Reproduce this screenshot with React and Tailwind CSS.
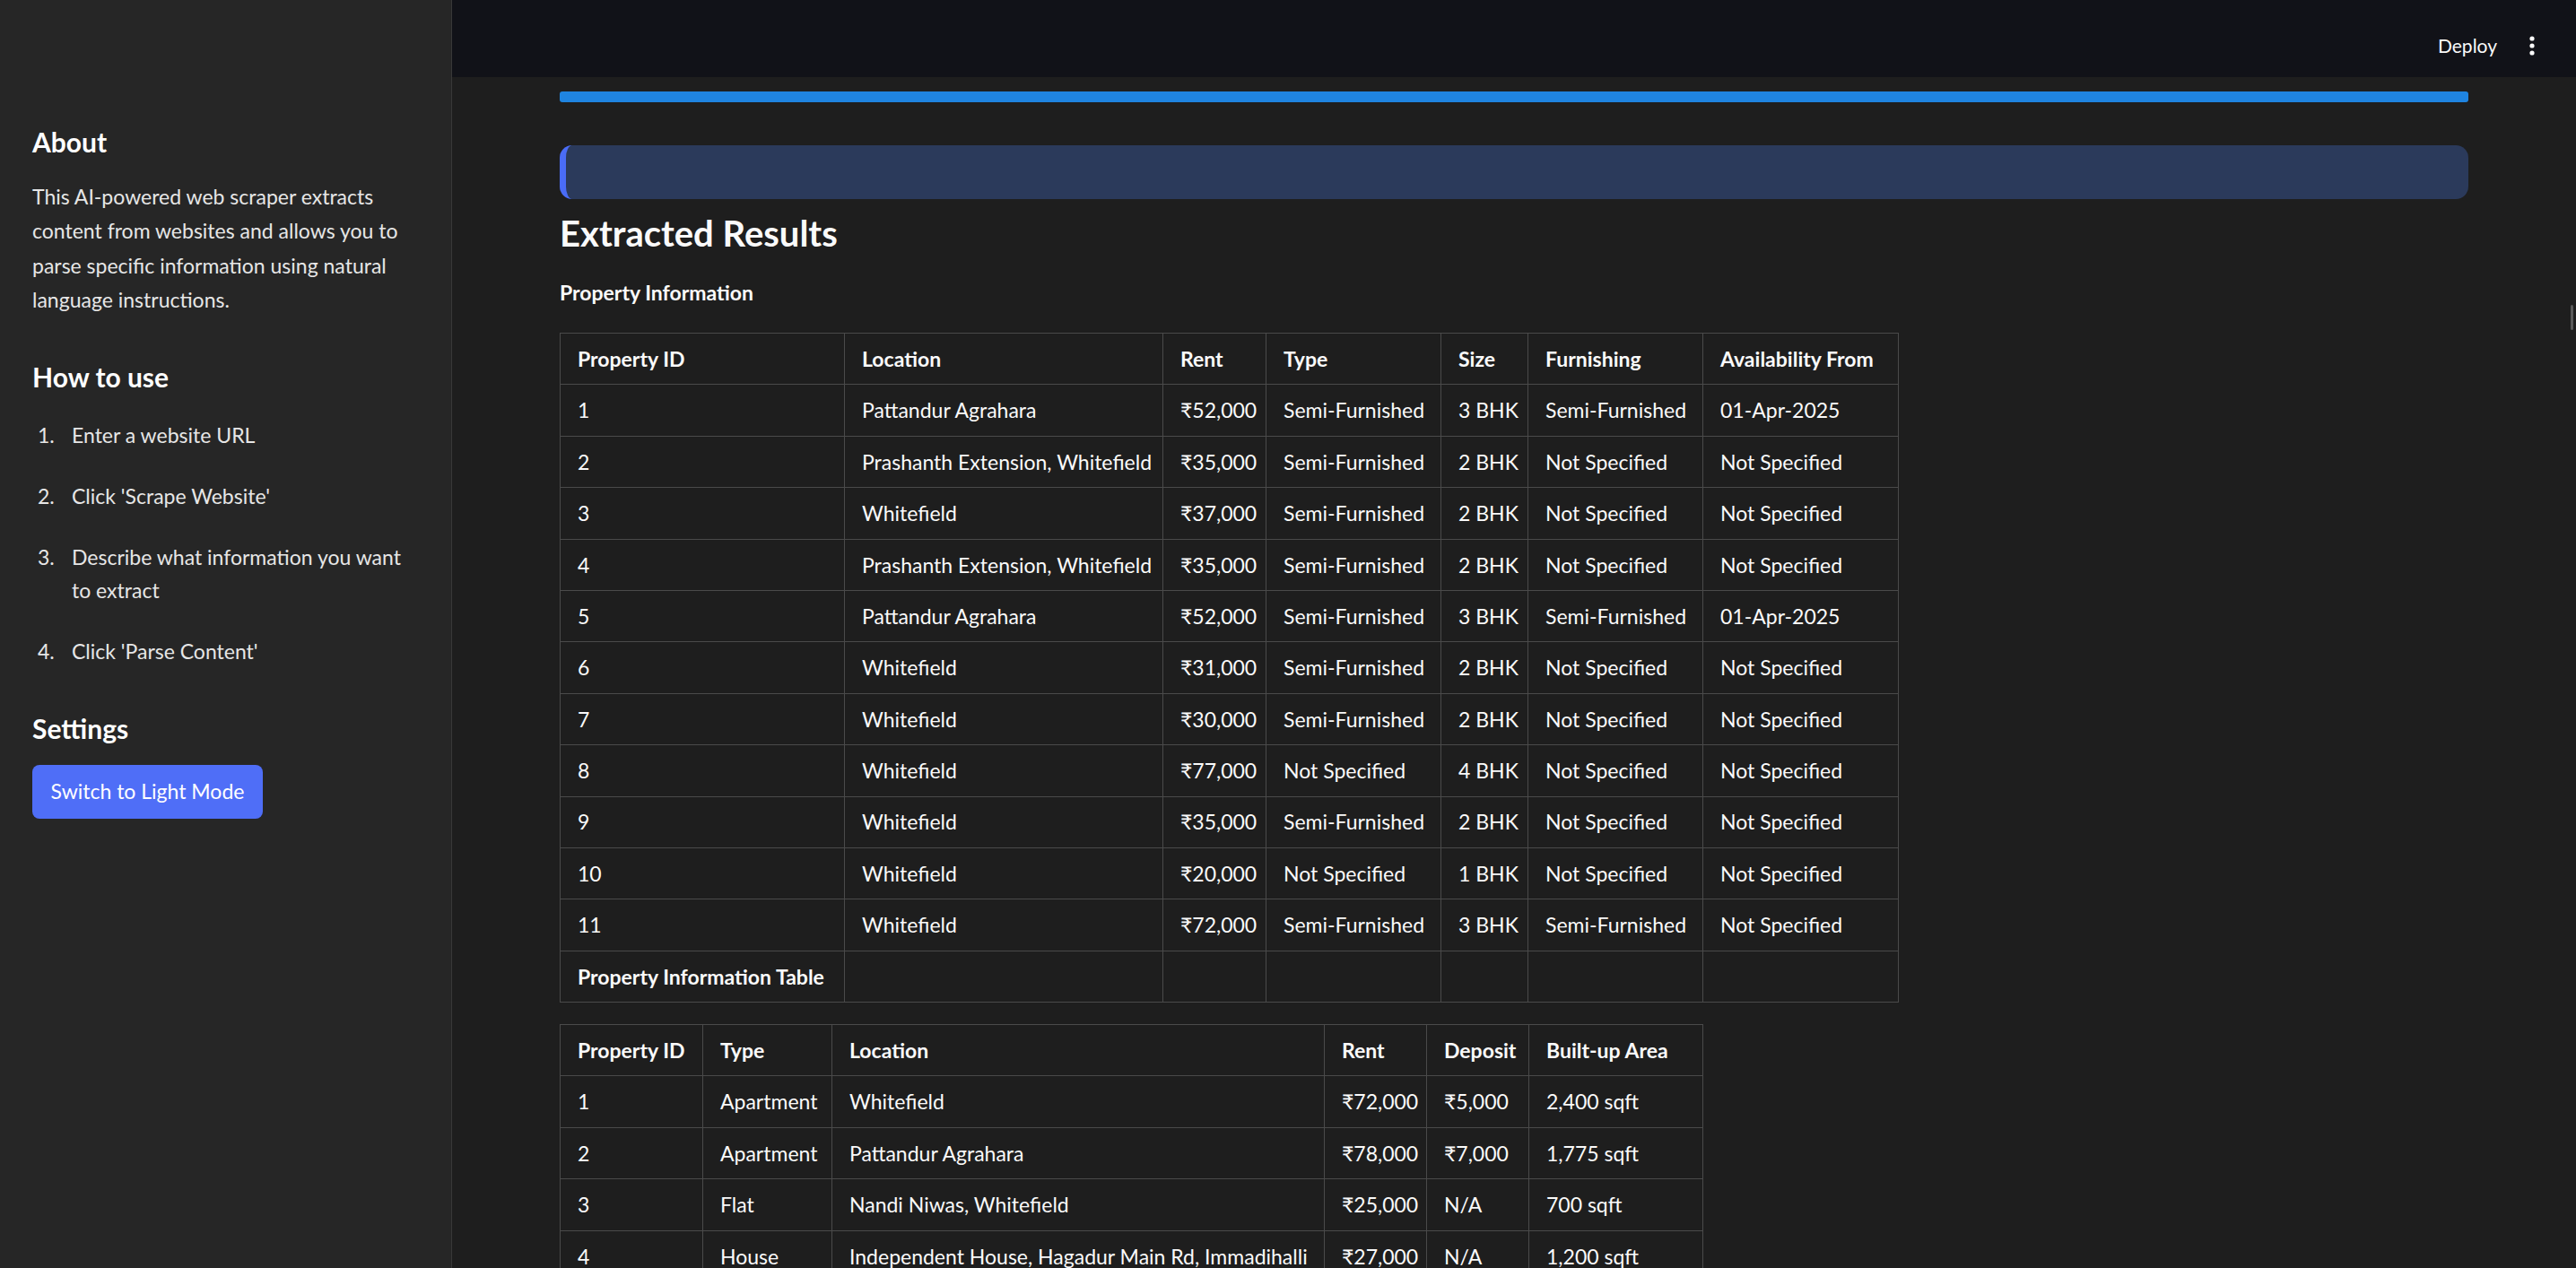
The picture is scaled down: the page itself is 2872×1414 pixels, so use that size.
const steps = [
  ["1.", "Enter a website URL"],
  ["2.", "Click 'Scrape Website'"],
  ["3.", "Describe what information you want to extract"],
  ["4.", "Click 'Parse Content'"],
]

const NS = "Not Specified"
const SF = "Semi-Furnished"

const propertyCols = [
  ["Property ID", 317],
  ["Location", 355],
  ["Rent", 115],
  ["Type", 195],
  ["Size", 97],
  ["Furnishing", 195],
  ["Availability From", 218],
]

const propertyRows = [
  ["1", "Pattandur Agrahara", "₹52,000", SF, "3 BHK", SF, "01-Apr-2025"],
  ["2", "Prashanth Extension, Whitefield", "₹35,000", SF, "2 BHK", NS, NS],
  ["3", "Whitefield", "₹37,000", SF, "2 BHK", NS, NS],
  ["4", "Prashanth Extension, Whitefield", "₹35,000", SF, "2 BHK", NS, NS],
  ["5", "Pattandur Agrahara", "₹52,000", SF, "3 BHK", SF, "01-Apr-2025"],
  ["6", "Whitefield", "₹31,000", SF, "2 BHK", NS, NS],
  ["7", "Whitefield", "₹30,000", SF, "2 BHK", NS, NS],
  ["8", "Whitefield", "₹77,000", NS, "4 BHK", NS, NS],
  ["9", "Whitefield", "₹35,000", SF, "2 BHK", NS, NS],
  ["10", "Whitefield", "₹20,000", NS, "1 BHK", NS, NS],
  ["11", "Whitefield", "₹72,000", SF, "3 BHK", SF, NS],
]

const listingCols = [
  ["Property ID", 159],
  ["Type", 144],
  ["Location", 549],
  ["Rent", 114],
  ["Deposit", 114],
  ["Built-up Area", 194],
]

const listingRows = [
  ["1", "Apartment", "Whitefield", "₹72,000", "₹5,000", "2,400 sqft"],
  ["2", "Apartment", "Pattandur Agrahara", "₹78,000", "₹7,000", "1,775 sqft"],
  ["3", "Flat", "Nandi Niwas, Whitefield", "₹25,000", "N/A", "700 sqft"],
  ["4", "House", "Independent House, Hagadur Main Rd, Immadihalli", "₹27,000", "N/A", "1,200 sqft"],
]

function DataTable({ cols, rows, footer }) {
  const total = cols.reduce((s, c) => s + c[1], 0) + 1
  return (
    <table className="table-fixed border-collapse text-[23px] text-[#fafafa]" style={{ width: total }}>
      <colgroup>
        {cols.map(([name, w]) => (
          <col key={name} style={{ width: w }} />
        ))}
      </colgroup>
      <thead>
        <tr>
          {cols.map(([name]) => (
            <th key={name} className="h-[57.4px] whitespace-nowrap border border-[#4a4a4a] px-[19px] text-left font-bold">
              {name}
            </th>
          ))}
        </tr>
      </thead>
      <tbody>
        {rows.map((row, i) => (
          <tr key={i}>
            {row.map((cell, j) => (
              <td key={j} className="h-[57.4px] whitespace-nowrap border border-[#4a4a4a] px-[19px]">
                {cell}
              </td>
            ))}
          </tr>
        ))}
        {footer && (
          <tr>
            <td className="h-[57.4px] whitespace-nowrap border border-[#4a4a4a] px-[19px] font-bold">{footer}</td>
            {cols.slice(1).map(([name]) => (
              <td key={name} className="h-[57.4px] border border-[#4a4a4a]" />
            ))}
          </tr>
        )}
      </tbody>
    </table>
  )
}

function Sidebar() {
  return (
    <aside className="h-full w-[504px] shrink-0 border-r border-[#383838] bg-[#262626] pl-[36px] pr-[36px] pt-[140px] text-[#e6e6e6]">
      <h3 className="text-[30px] font-bold leading-[36px] text-white">About</h3>
      <p className="mt-[24px] w-[432px] text-[23px] leading-[38.4px]">
        This AI-powered web scraper extracts content from websites and allows you to parse specific information using
        natural language instructions.
      </p>
      <h3 className="mt-[48px] text-[30px] font-bold leading-[36px] text-white">How to use</h3>
      <ol className="mt-[29px] pl-[6px]">
        {steps.map(([n, text]) => (
          <li key={n} className="mb-[31px] flex text-[23px] leading-[37px]">
            <span className="w-[38px] shrink-0">{n}</span>
            <span>{text}</span>
          </li>
        ))}
      </ol>
      <h3 className="mt-[49px] text-[30px] font-bold leading-[36px] text-white">Settings</h3>
      <button
        type="button"
        className="mt-[23px] h-[60px] w-[257px] rounded-[8px] bg-[#4f6ef7] text-[23px] text-white"
      >
        Switch to Light Mode
      </button>
    </aside>
  )
}

export default function App() {
  return (
    <div className="flex h-screen w-full overflow-hidden bg-[#1e1e1e] font-['Lato','Noto_Sans',sans-serif]">
      <Sidebar />
      <main className="relative flex min-w-0 flex-1 flex-col">
        <header className="flex h-[86px] shrink-0 items-center justify-end bg-[#111218] pr-[39px] pt-[16px]">
          <span className="text-[21px] leading-[30px] text-[#fafafa]">Deploy</span>
          <svg className="ml-[29px]" width="20" height="22" viewBox="0 0 20 22" fill="#fafafa">
            <circle cx="10" cy="3" r="2.6" />
            <circle cx="10" cy="11" r="2.6" />
            <circle cx="10" cy="19" r="2.6" />
          </svg>
        </header>
        <div className="px-[120px] pt-[16px]">
          <div className="h-[12px] rounded-[3px] bg-[#1f84e0]" />
          <div className="mt-[48px] h-[60px] rounded-[14px] border-l-[7px] border-[#4a6cf7] bg-[#2b3a5b]" />
          <h2 className="mt-[15px] text-[40px] font-bold leading-[46px] text-[#fafafa]">Extracted Results</h2>
          <p className="mt-[26px] text-[23px] font-bold leading-[35px] text-[#fafafa]">Property Information</p>
          <div className="mt-[27px]">
            <DataTable cols={propertyCols} rows={propertyRows} footer="Property Information Table" />
          </div>
          <div className="mt-[24px]">
            <DataTable cols={listingCols} rows={listingRows} />
          </div>
        </div>
        <div className="absolute right-[3px] top-[340px] h-[28px] w-[3px] rounded-full bg-[#5a5a5a]" />
      </main>
    </div>
  )
}
